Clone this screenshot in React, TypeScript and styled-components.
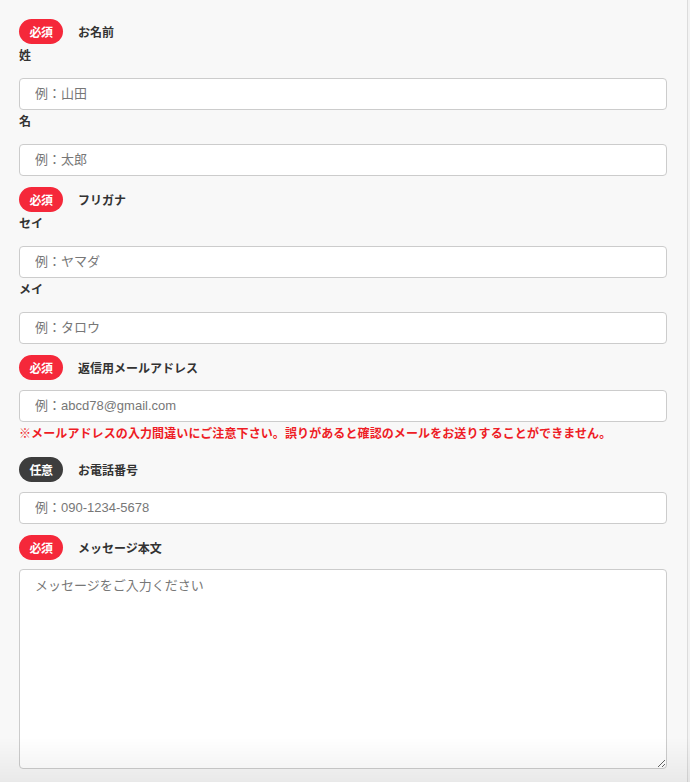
import React from "react";
import styled, { createGlobalStyle } from "styled-components";

const GlobalStyle = createGlobalStyle`
  html, body {
    margin: 0;
    padding: 0;
    background: #f3f3f3;
  }
  body {
    font-family: "Noto Sans CJK JP", "Noto Sans", sans-serif;
    color: #333;
  }
`;

type Field = {
  label?: string;
  placeholder: string;
};

type Section = {
  title: string;
  required: boolean;
  fields: Field[];
  note?: string;
  multiline?: boolean;
};

const SECTIONS: Section[] = [
  {
    title: "お名前",
    required: true,
    fields: [
      { label: "姓", placeholder: "例：山田" },
      { label: "名", placeholder: "例：太郎" },
    ],
  },
  {
    title: "フリガナ",
    required: true,
    fields: [
      { label: "セイ", placeholder: "例：ヤマダ" },
      { label: "メイ", placeholder: "例：タロウ" },
    ],
  },
  {
    title: "返信用メールアドレス",
    required: true,
    fields: [{ placeholder: "例：abcd78@gmail.com" }],
    note: "※メールアドレスの入力間違いにご注意下さい。誤りがあると確認のメールをお送りすることができません。",
  },
  {
    title: "お電話番号",
    required: false,
    fields: [{ placeholder: "例：090-1234-5678" }],
  },
  {
    title: "メッセージ本文",
    required: true,
    fields: [{ placeholder: "メッセージをご入力ください" }],
    multiline: true,
  },
];

const App = () => {
  return (
    <>
      <GlobalStyle />
      <Page>
        <Form>
          {SECTIONS.map((s) => (
            <Group key={s.title}>
              <Heading>
                <Badge $required={s.required}>{s.required ? "必須" : "任意"}</Badge>
                <Title>{s.title}</Title>
              </Heading>
              {s.fields.map((f) => (
                <React.Fragment key={f.placeholder}>
                  {f.label && <SubLabel>{f.label}</SubLabel>}
                  {s.multiline ? (
                    <TextArea placeholder={f.placeholder} />
                  ) : (
                    <Input type="text" placeholder={f.placeholder} />
                  )}
                </React.Fragment>
              ))}
              {s.note && <Note>{s.note}</Note>}
            </Group>
          ))}
        </Form>
        <BottomFade />
      </Page>
    </>
  );
};

const FIELD_FONT = `"Liberation Sans", "Noto Sans CJK JP", sans-serif`;

const Page = styled.div`
  width: 688px;
  min-height: 782px;
  background: #f8f8f8;
  border-right: 1px solid #dcdcdc;
  box-sizing: border-box;
`;

const Form = styled.form`
  display: flex;
  flex-direction: column;
  gap: 11px;
  padding: 19px 21px 0 19px;
`;

const Group = styled.div`
  display: flex;
  flex-direction: column;
`;

const Heading = styled.div`
  display: flex;
  align-items: center;
  gap: 15px;
  height: 25px;
`;

const Badge = styled.span<{ $required: boolean }>`
  display: inline-flex;
  align-items: center;
  justify-content: center;
  width: 44px;
  height: 25px;
  border-radius: 13px;
  background: ${(p) => (p.$required ? "#f5283a" : "#3d3d3d")};
  color: #fff;
  font-size: 12px;
  font-weight: 700;
  letter-spacing: -0.5px;
`;

const Title = styled.span`
  font-size: 12px;
  font-weight: 700;
  color: #333;
`;

const SubLabel = styled.div`
  font-size: 12px;
  font-weight: 700;
  line-height: 22px;
  margin-bottom: 2px;
  color: #333;
`;

const Input = styled.input`
  display: block;
  box-sizing: border-box;
  width: 648px;
  height: 32px;
  margin: 10px 0 0;
  padding: 0 15px 2px;
  border: 1px solid #cccccc;
  border-radius: 4px;
  background: #fff;
  font-family: ${FIELD_FONT};
  font-size: 13px;
  color: #333;
  outline: none;

  &::placeholder {
    color: #777;
  }
`;

const TextArea = styled.textarea`
  display: block;
  box-sizing: border-box;
  width: 648px;
  height: 200px;
  margin: 9px 0 0;
  padding: 5px 15px;
  border: 1px solid #cccccc;
  border-radius: 4px;
  background: #fff;
  font-family: ${FIELD_FONT};
  font-size: 13px;
  color: #333;
  outline: none;

  &::placeholder {
    color: #777;
  }
`;

const Note = styled.p`
  margin: 0 0 2px;
  font-size: 12px;
  line-height: 22px;
  font-weight: 700;
  letter-spacing: 0.1px;
  color: #ee1c25;
  white-space: nowrap;
`;

const BottomFade = styled.div`
  position: fixed;
  left: 0;
  right: 0;
  bottom: 0;
  height: 44px;
  pointer-events: none;
  background: linear-gradient(to bottom, rgba(0, 0, 0, 0), rgba(0, 0, 0, 0.06));
`;

export default App;
